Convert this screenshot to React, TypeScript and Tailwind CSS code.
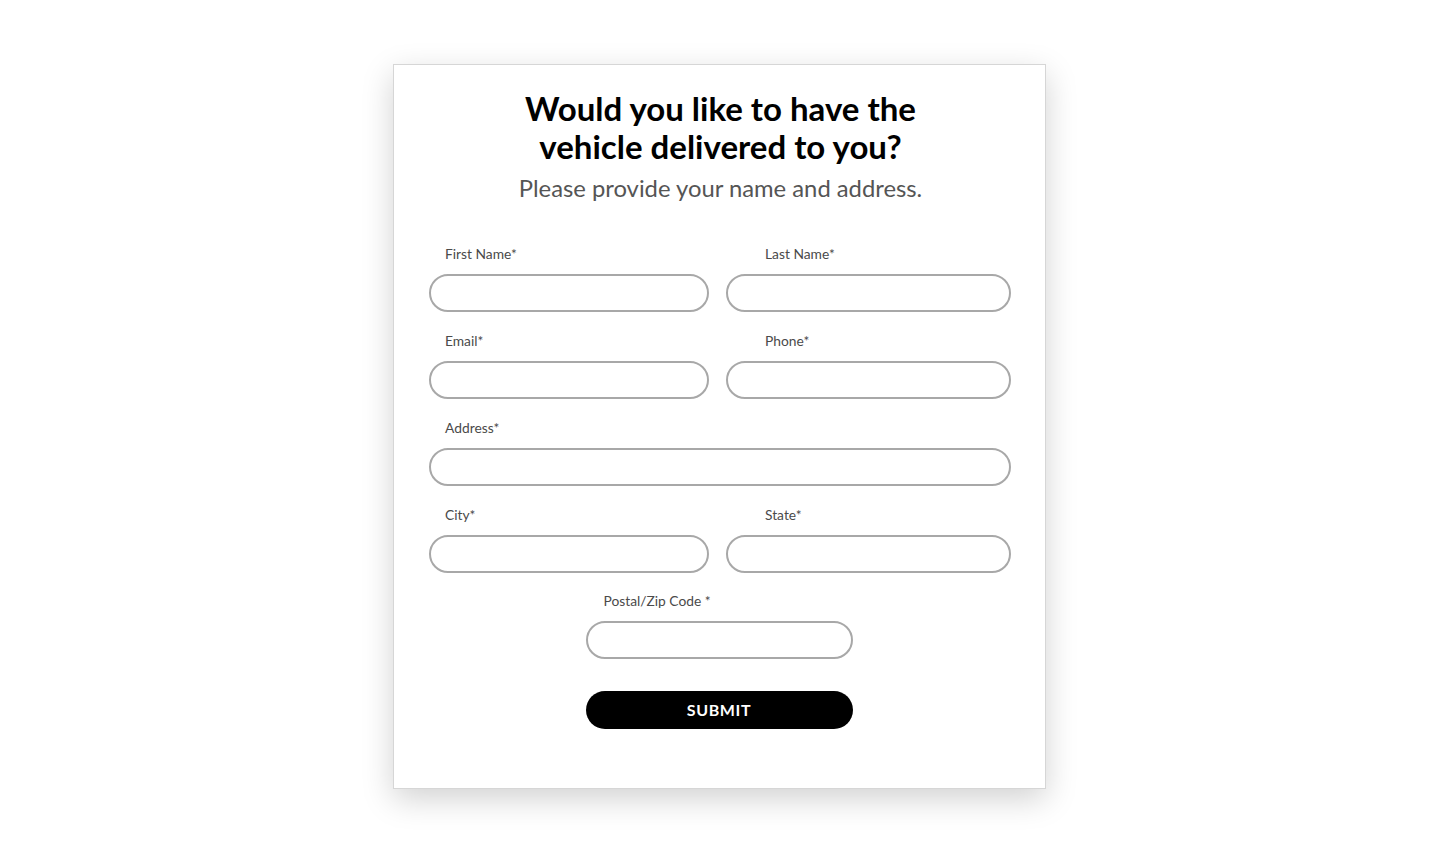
import React from "react";

const Field = ({ label, labelPad = 16 }: { label: string; labelPad?: number }) => (
  <div className="flex flex-col">
    <label
      className="text-[13.8px] leading-[16px] text-[#4a4a4a] mb-[12px]"
      style={{ paddingLeft: labelPad }}
    >
      {label}
    </label>
    <input className="h-[38px] w-full rounded-full border-2 border-[#a8a8a8] bg-white outline-none px-4" />
  </div>
);

export default function App() {
  return (
    <div
      className="min-h-[845px] bg-white pt-[64px] pr-[1px] flex justify-center items-start"
      style={{ fontFamily: "Lato, 'Noto Sans', sans-serif" }}
    >
      <div className="w-[653px] h-[725px] bg-white border border-[#d6d6d6] shadow-[0_10px_30px_rgba(0,0,0,0.18)] pt-[24px] pl-[35px] pr-[33px]">
        <h1 className="text-center text-[33px] leading-[38px] font-bold text-black">
          Would you like to have the
          <br />
          vehicle delivered to you?
        </h1>
        <p className="mt-[9px] text-center text-[23.8px] leading-[28px] text-[#555555]">
          Please provide your name and address.
        </p>
        <div className="mt-[44px] grid grid-cols-[280px_285px] gap-x-[17px] gap-y-[21px]">
          <Field label="First Name*" />
          <Field label="Last Name*" labelPad={39} />
          <Field label="Email*" />
          <Field label="Phone*" labelPad={39} />
          <div className="col-span-2">
            <Field label="Address*" />
          </div>
          <Field label="City*" />
          <Field label="State*" labelPad={39} />
        </div>
        <div className="mt-[20px] flex flex-col items-center">
          <div className="w-[267px] ml-[-3px]">
            <Field label="Postal/Zip Code *" labelPad={18} />
          </div>
          <button className="mt-[32px] ml-[-3px] h-[38px] w-[267px] rounded-full bg-black text-white text-[16px] font-bold tracking-[0.6px]">
            SUBMIT
          </button>
        </div>
      </div>
    </div>
  );
}
